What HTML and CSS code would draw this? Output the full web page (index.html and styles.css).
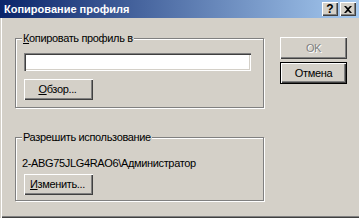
FILE: index.html
```html
<!DOCTYPE html>
<html lang="ru">
<head>
<meta charset="utf-8">
<link rel="stylesheet" href="styles.css">
</head>
<body>
<div class="window">
  <div class="titlebar">
    <span class="title">Копирование профиля</span>
    <div class="tb-buttons">
      <div class="tb-btn"><span class="help">?</span></div>
      <div class="tb-btn">
        <svg width="8" height="7" viewBox="0 0 8 7"><path d="M0 0h2l2 2 2-2h2L5 3.5 8 7H6L4 5 2 7H0l3-3.5z" fill="#000"/></svg>
      </div>
    </div>
  </div>
  <div class="content">
    <div class="left">
      <fieldset class="group g1">
        <legend><u>К</u>опировать профиль в</legend>
        <div class="edit"></div>
        <div class="btn browse"><span><u>О</u>бзор...</span></div>
      </fieldset>
      <fieldset class="group g2">
        <legend>Разрешить использование</legend>
        <div class="label">2-ABG75JLG4RAO6\Администратор</div>
        <div class="btn change"><span><u>И</u>зменить...</span></div>
      </fieldset>
    </div>
    <div class="right">
      <div class="btn wide disabled">OK</div>
      <div class="btn wide default">Отмена</div>
    </div>
  </div>
</div>
</body>
</html>
```
FILE: styles.css
```css
* { box-sizing: border-box; }
html, body { margin: 0; padding: 0; }
body {
  width: 359px;
  height: 218px;
  overflow: hidden;
  font-family: "Liberation Sans", Arial, sans-serif;
  font-size: 11px;
  color: #000;
}
.window {
  width: 359px;
  height: 218px;
  background: #d4d0c8;
  box-shadow: inset 1px 0 #d4d0c8, inset 2px 0 #fff, inset 0 -1px #404040, inset 0 -2px #808080;
  display: flex;
  flex-direction: column;
}
.titlebar {
  height: 18px;
  flex: none;
  background: linear-gradient(to right, #0a246a, #a6caf0);
  display: flex;
  align-items: center;
  padding-left: 4px;
  padding-right: 3px;
}
.title {
  color: #fff;
  font-weight: bold;
  font-size: 11px;
  flex: 1;
  line-height: 18px;
}
.tb-buttons {
  display: flex;
  gap: 2px;
}
.tb-btn {
  width: 16px;
  height: 14px;
  background: #d4d0c8;
  box-shadow: inset 1px 1px #fff, inset -1px -1px #404040, inset -2px -2px #808080;
  display: flex;
  align-items: center;
  justify-content: center;
}
.help {
  font-weight: bold;
  font-size: 12px;
  line-height: 12px;
}
.content {
  display: flex;
  padding: 14px 0 0 15px;
  letter-spacing: -0.35px;
}
.left {
  width: 250px;
  display: flex;
  flex-direction: column;
  gap: 23px;
}
.group {
  margin: 0;
  width: 249px;
  border: 1px solid #808080;
  box-shadow: 1px 1px 0 #fff, inset 1px 1px 0 #fff;
  padding: 8px 8px 7px 8px;
  display: flex;
  flex-direction: column;
  align-items: flex-start;
}
legend {
  padding: 0 1px;
  margin-left: -2px;
  line-height: 13px;
  height: 13px;
  background: #d4d0c8;
}
.edit {
  width: 227px;
  height: 18px;
  background: #fff;
  box-shadow: inset 1px 1px #808080, inset 2px 2px #404040, inset -1px -1px #fff, inset -2px -2px #d4d0c8;
  margin-bottom: 8px;
}
.btn {
  width: 69px;
  height: 21px;
  background: #d4d0c8;
  box-shadow: inset 1px 1px #fff, inset -1px -1px #404040, inset -2px -2px #808080;
  display: flex;
  align-items: center;
  justify-content: center;
  line-height: 13px;
}
.browse span, .change span { margin-left: -2px; }
.g2 { padding-top: 13px; padding-bottom: 5px; }
.label {
  line-height: 13px;
  margin-left: -2px;
  margin-bottom: 4px;
  white-space: nowrap;
}
.right {
  margin-left: 15px;
  padding-top: 5px;
  display: flex;
  flex-direction: column;
  gap: 3px;
}
.wide {
  width: 67px;
  height: 22px;
}
.disabled {
  color: #808080;
  text-shadow: 1px 1px 0 #fff;
}
.default {
  border: 1px solid #000;
  box-shadow: inset 1px 1px #fff, inset -1px -1px #404040, inset -2px -2px #808080;
}
```
